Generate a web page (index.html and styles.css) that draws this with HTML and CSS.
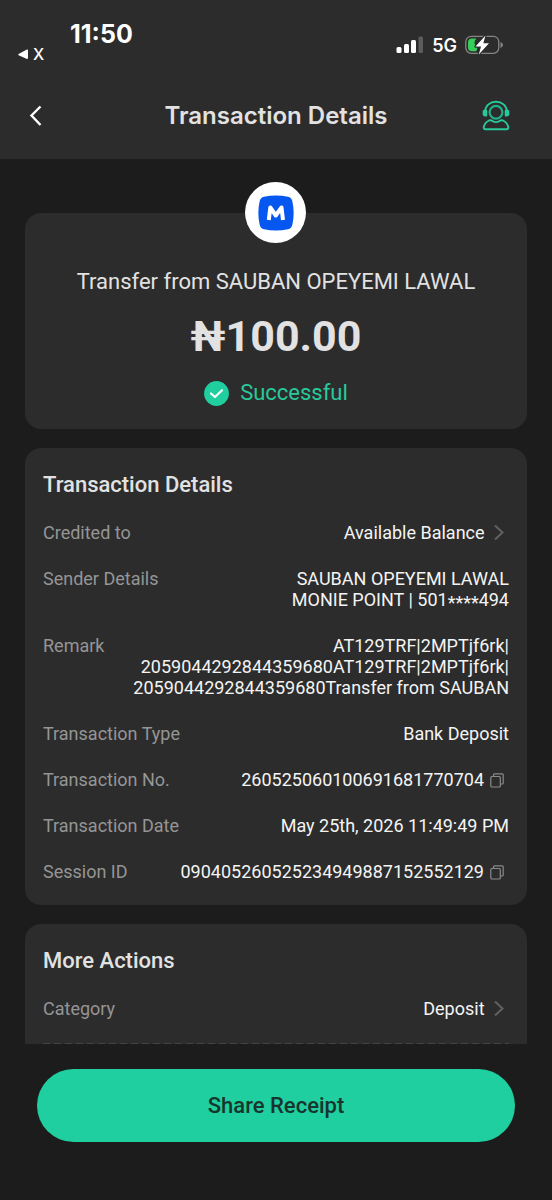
FILE: index.html
```html
<!DOCTYPE html>
<html lang="en">
<head>
<meta charset="utf-8">
<meta name="viewport" content="width=device-width, initial-scale=1">
<title>Transaction Details</title>
<link rel="stylesheet" href="styles.css">
</head>
<body>
<div class="screen">
  <header class="top">
    <div class="status">
      <div class="status-left">
        <time class="clock">11:50</time>
        <a class="return" href="#"><svg width="10" height="11" viewBox="0 0 10 11" aria-hidden="true"><path d="M0.6 5 8.4 0.7Q10 0 10 1.6V8.8Q10 10.4 8.4 9.7L0.6 6.2Q-0.2 5.6 0.6 5Z" fill="#fff"/></svg>X</a>
      </div>
      <div class="status-right">
        <svg width="28" height="18" viewBox="0 0 28 18" aria-label="Signal"><g fill="#fff"><rect x="0.5" y="11" width="5" height="6" rx="1.5"/><rect x="8" y="8" width="5" height="9" rx="1.5"/><rect x="15" y="4" width="5" height="13" rx="1.5"/></g><rect x="22.5" y="0.5" width="4.5" height="16.5" rx="1.5" fill="#5c5c5c"/></svg>
        <span class="network">5G</span>
        <svg width="38" height="22" viewBox="0 0 38 22" aria-label="Battery charging"><rect x="0.8" y="2.3" width="33" height="17" rx="5.5" fill="none" stroke="#858585" stroke-width="1.3"/><path d="M35.5 8Q38 9.2 38 11T35.5 14Z" fill="#858585"/><path d="M7 4.5H11.5Q8 8 10.5 11.5Q13.5 14 11 17.3H7Q3 17.3 3 13V8.5Q3 4.5 7 4.5Z" fill="#35ce5b"/><path d="M20.5 1.5 10.500 12.500H16L13.800 20.500 24 9.300H18.300Z" fill="#fff" stroke="#2c2c2c" stroke-width="2.4" stroke-linejoin="round" paint-order="stroke"/></svg>
      </div>
    </div>
    <nav class="bar">
      <button class="icon-btn" type="button" aria-label="Back"><svg width="14" height="22" viewBox="0 0 14 22" fill="none" stroke="#fff" stroke-width="2.4"><path d="M12.5 1.5 3.500 10.500 12.500 20"/></svg></button>
      <h1 class="bar-title">Transaction Details</h1>
      <button class="icon-btn" type="button" aria-label="Support"><svg width="28" height="31" viewBox="0 0 28 31" fill="none" stroke="#28c99a" stroke-width="1.9" stroke-linejoin="round"><path d="M3 11.5C3.5 5.5 8 1.700 14 1.700S24.500 5.500 25 11.500"/><path d="M2 10.800H4.300V15.500H3Q1.600 15.500 1.600 14V11.500ZM26 10.800H23.700V15.500H25Q26.400 15.500 26.400 14V11.500Z" fill="#28c99a"/><circle cx="14" cy="12.2" r="6.4" stroke="#22b088" stroke-width="2.2"/><path d="M7 20.500Q9 19.800 10.500 21Q14 23.300 17.500 21Q19 19.800 21 20.500Q25 22.300 26.300 27Q26.600 29.200 24.500 29.200H3.500Q1.400 29.200 1.700 27Q3 22.300 7 20.500Z"/></svg></button>
    </nav>
  </header>

  <main class="content">
    <section class="card summary">
      <span class="badge"><svg width="36" height="36" viewBox="0 0 36 36" aria-label="Moniepoint"><path d="M6 1.8Q18-1 30 1.800Q33.500 2.500 34.300 6Q37 18 34.300 30Q33.500 33.500 30 34.200Q18 37 6 34.200Q2.500 33.500 1.700 30Q-1 18 1.700 6Q2.500 2.500 6 1.800Z" fill="#0657f0"/><path d="M10.800 25 12.300 12.500 17.800 20.500 23.500 12.500 25 25" fill="none" stroke="#fff" stroke-width="4" stroke-linejoin="round"/></svg></span>
      <p class="summary-title">Transfer from SAUBAN OPEYEMI LAWAL</p>
      <p class="amount">₦100.00</p>
      <p class="state"><svg width="25" height="25" viewBox="0 0 25 25" aria-hidden="true"><circle cx="12.5" cy="12.5" r="12.4" fill="#1fcf9f"/><path d="M7 12.5 11 16 18 9.300" fill="none" stroke="#fff" stroke-width="2.2" stroke-linecap="round" stroke-linejoin="round"/></svg>Successful</p>
    </section>

    <section class="card">
      <h2 class="card-title">Transaction Details</h2>
      <dl class="rows">
        <div class="row"><dt>Credited to</dt><dd><a class="link" href="#">Available Balance <svg class="mark" width="20" height="17" viewBox="0 0 20 17" fill="none" stroke="#626262" stroke-width="1.9"><path d="M6 1.5 13.500 8.500 6 15.500"/></svg></a></dd></div>
        <div class="row"><dt>Sender Details</dt><dd>SAUBAN OPEYEMI LAWAL<br>MONIE POINT | 501<span class="mask">****</span>494</dd></div>
        <div class="row"><dt>Remark</dt><dd>AT129TRF|2MPTjf6rk|<br>2059044292844359680AT129TRF|2MPTjf6rk|<br>2059044292844359680Transfer from SAUBAN</dd></div>
        <div class="row"><dt>Transaction Type</dt><dd>Bank Deposit</dd></div>
        <div class="row"><dt>Transaction No.</dt><dd>260525060100691681770704<button class="copy" type="button" aria-label="Copy transaction number"><svg width="14" height="15" viewBox="0 0 14 15" fill="none" stroke="#8a8a8a" stroke-width="1.2"><rect x="0.8" y="3.5" width="9.5" height="10.5" rx="1"/><path d="M3.5 3.500V1.800Q3.500 0.800 4.500 0.800H12.200Q13.200 0.800 13.200 1.800V10Q13.200 11 12.200 11H10.300"/></svg></button></dd></div>
        <div class="row"><dt>Transaction Date</dt><dd>May 25th, 2026 11:49:49 PM</dd></div>
        <div class="row"><dt>Session ID</dt><dd>090405260525234949887152552129<button class="copy" type="button" aria-label="Copy session ID"><svg width="14" height="15" viewBox="0 0 14 15" fill="none" stroke="#8a8a8a" stroke-width="1.2"><rect x="0.8" y="3.5" width="9.5" height="10.5" rx="1"/><path d="M3.5 3.500V1.800Q3.500 0.800 4.500 0.800H12.200Q13.200 0.800 13.200 1.800V10Q13.200 11 12.200 11H10.300"/></svg></button></dd></div>
      </dl>
    </section>

    <section class="card actions">
      <h2 class="card-title">More Actions</h2>
      <dl class="rows dashed">
        <div class="row"><dt>Category</dt><dd><a class="link" href="#">Deposit <svg class="mark" width="20" height="17" viewBox="0 0 20 17" fill="none" stroke="#626262" stroke-width="1.9"><path d="M6 1.5 13.500 8.500 6 15.500"/></svg></a></dd></div>
      </dl>
    </section>
  </main>

  <footer class="footer">
    <button class="share" type="button">Share Receipt</button>
  </footer>
</div>
</body>
</html>
```

FILE: styles.css
```css
* { box-sizing: border-box; }

body {
  margin: 0;
  background: #1c1c1c;
  color: #e2e2e2;
  font-family: Roboto, "Liberation Sans", sans-serif;
}

h1, h2, p, dl, dd { margin: 0; }

button {
  padding: 0;
  border: 0;
  background: none;
  font: inherit;
}

a { color: inherit; text-decoration: none; }
svg { display: block; flex: none; }

.screen {
  display: flex;
  flex-direction: column;
  min-height: 100vh;
}

.top {
  padding-bottom: 22px;
  background: #2c2c2c;
  color: #fff;
  font-family: Inter, Roboto, sans-serif;
}

.status {
  display: flex;
  justify-content: space-between;
  padding: 21px 49px 0 18px;
}

.status-left { display: flex; flex-direction: column; }

.clock {
  padding-left: 52px;
  font-size: 25px;
  font-weight: 700;
  line-height: 26px;
}

.return {
  display: flex;
  align-items: center;
  gap: 5px;
  font-size: 16px;
  font-weight: 500;
  line-height: 14px;
}

.status-right {
  display: flex;
  align-items: center;
  gap: 8px;
  padding-top: 8px;
}

.network { font-size: 18px; font-weight: 600; }

.bar {
  display: flex;
  align-items: center;
  justify-content: space-between;
  padding: 33px 42px 0 28px;
}

.icon-btn {
  display: flex;
  align-items: center;
  min-width: 28px;
  height: 43px;
}

.bar-title {
  padding-left: 14px;
  color: #e2e2e2;
  font-size: 24px;
  font-weight: 600;
  line-height: 28px;
}

.content {
  display: flex;
  flex: 1;
  flex-direction: column;
  gap: 19px;
  padding: 54px 25px 0;
}

.card {
  padding: 24px 18px 23px;
  border-radius: 16px;
  background: #2c2c2c;
}

.summary {
  position: relative;
  display: flex;
  flex-direction: column;
  align-items: center;
  padding-top: 56px;
}

.badge {
  position: absolute;
  top: -31px;
  left: calc(50% - 31px);
  display: grid;
  place-items: center;
  width: 61px;
  height: 61px;
  border-radius: 50%;
  background: #fff;
}

.summary-title { font-size: 22px; line-height: 26px; text-align: center; }

.amount {
  margin: 15px 0 18px;
  font-size: 43px;
  font-weight: 700;
  line-height: 52px;
}

.state {
  display: flex;
  align-items: center;
  gap: 11px;
  color: #28c99a;
  font-size: 22px;
  line-height: 26px;
}

.card-title { font-size: 22px; font-weight: 500; line-height: 26px; }

.rows {
  display: flex;
  flex-direction: column;
  gap: 25px;
  margin-top: 24px;
  font-size: 18px;
  line-height: 21px;
}

.row {
  display: flex;
  justify-content: space-between;
}

dt { color: #959595; white-space: nowrap; }

dd {
  display: flow-root;
  color: #f4f4f4;
  text-align: right;
}

.mark {
  display: inline-block;
  vertical-align: -2px;
}

.mask { line-height: 0; vertical-align: -3px; }

.copy {
  margin: 0 5px 0 6px;
  vertical-align: -2px;
}

.actions {
  padding-bottom: 0;
  border-radius: 16px 16px 0 0;
}

.dashed {
  padding-bottom: 25px;
  background: repeating-linear-gradient(90deg, #434343 0 7px, transparent 7px 11px) bottom / 100% 1px no-repeat;
}

.footer { padding: 25px 37px 58px; }

.share {
  width: 100%;
  height: 73px;
  border-radius: 37px;
  background: #1fcf9f;
  color: #17352d;
  font-size: 22px;
  font-weight: 500;
}
```
